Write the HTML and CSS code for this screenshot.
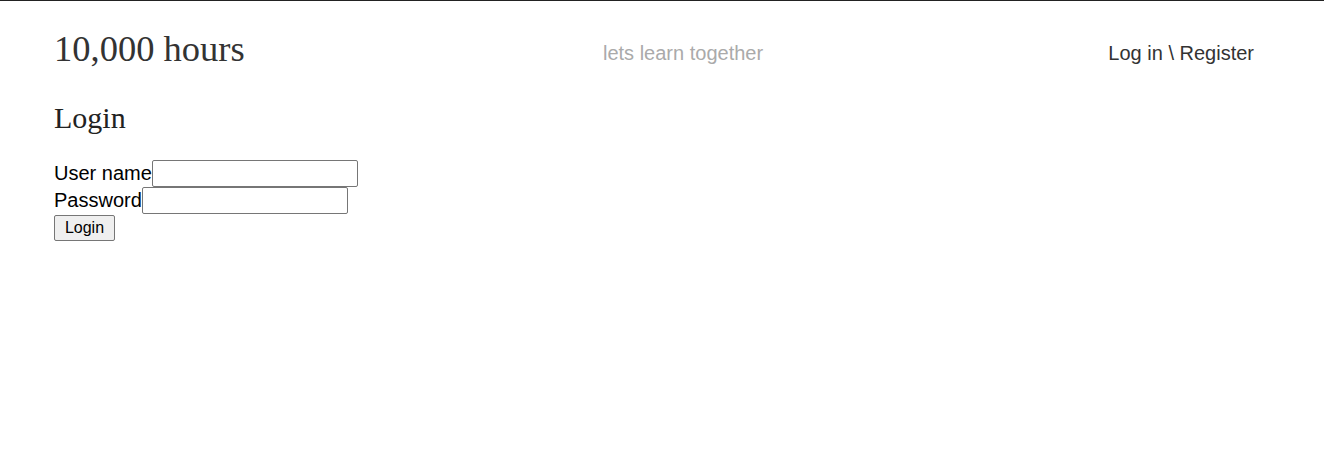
FILE: index.html
```html
<!DOCTYPE html>
<html>
<head>
<meta charset="utf-8">
<title>10,000 hours</title>
<link rel="stylesheet" href="styles.css">
</head>
<body>
<header class="site-header">
  <div class="brand">10,000 hours</div>
  <div class="tagline">lets learn together</div>
  <nav class="nav"><a href="#">Log in</a> \ <a href="#">Register</a></nav>
</header>
<main class="content">
  <h2 class="page-title">Login</h2>
  <form class="login-form">
    <div class="row"><label>User name</label><input type="text" class="field"></div>
    <div class="row"><label>Password</label><input type="password" class="field"></div>
    <div class="row"><button type="button" class="btn">Login</button></div>
  </form>
</main>
</body>
</html>
```
FILE: styles.css
```css
html, body {
  margin: 0;
  padding: 0;
  background: #fff;
}
body {
  border-top: 1px solid #222;
  font-family: "Liberation Sans", Arial, sans-serif;
  color: #000;
}
.site-header {
  display: grid;
  grid-template-columns: 549px 1fr auto;
  align-items: start;
  padding: 27px 70px 0 54px;
}
.brand {
  font-family: "Liberation Serif", "Times New Roman", serif;
  font-size: 36.5px;
  line-height: 42px;
  color: #333;
}
.tagline {
  font-size: 20px;
  line-height: 23px;
  margin-top: 14px;
  color: #aaa;
}
.nav {
  font-size: 20px;
  line-height: 23px;
  margin-top: 14px;
  color: #333;
}
.nav a {
  color: #333;
  text-decoration: none;
}
.content {
  padding: 0 54px;
}
.page-title {
  font-family: "Liberation Serif", "Times New Roman", serif;
  font-size: 30px;
  line-height: 34px;
  font-weight: normal;
  color: #222;
  margin: 31px 0 25px;
}
.login-form {
  font-size: 20px;
}
.row {
  display: flex;
  align-items: center;
  height: 27px;
}
.field {
  box-sizing: border-box;
  width: 206px;
  height: 27px;
  border: 1px solid #767676;
  border-radius: 2px;
  padding: 1px 2px;
  margin: 0;
}
.btn {
  box-sizing: border-box;
  width: 61px;
  height: 26px;
  font-family: "Liberation Sans", Arial, sans-serif;
  font-size: 16px;
  color: #000;
  background: #efefef;
  border: 1px solid #767676;
  border-radius: 2px;
  padding: 0;
}
```
